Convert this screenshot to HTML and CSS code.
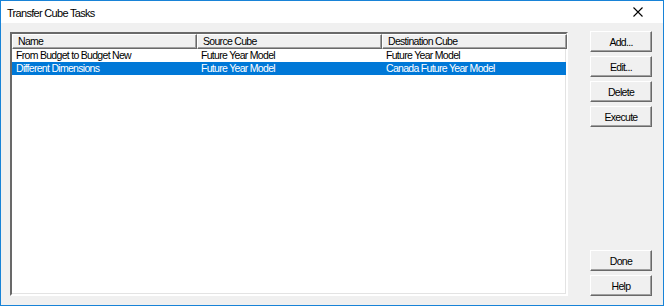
FILE: index.html
```html
<!DOCTYPE html>
<html lang="en">
<head>
    <meta charset="UTF-8">
    <title>Transfer Cube Tasks</title>
    <link rel="stylesheet" href="styles.css">
</head>
<body>
    <div class="window">
        <div class="titlebar">
            <span class="title">Transfer Cube Tasks</span>
            <span class="close">
                <svg width="10" height="10" viewBox="0 0 10 10"><path d="M0.5 0.5 L9.5 9.5 M9.5 0.5 L0.5 9.5" stroke="#000" stroke-width="1.1"/></svg>
            </span>
        </div>
        <div class="content">
            <div class="list">
                <div class="list-head">
                    <div class="col">Name</div>
                    <div class="col">Source Cube</div>
                    <div class="col">Destination Cube</div>
                </div>
                <div class="row">
                    <div class="cell">From Budget to Budget New</div>
                    <div class="cell">Future Year Model</div>
                    <div class="cell">Future Year Model</div>
                </div>
                <div class="row selected">
                    <div class="cell">Different Dimensions</div>
                    <div class="cell">Future Year Model</div>
                    <div class="cell">Canada Future Year Model</div>
                </div>
            </div>
            <div class="buttons">
                <button>Add...</button>
                <button>Edit...</button>
                <button>Delete</button>
                <button>Execute</button>
                <div class="spacer"></div>
                <button>Done</button>
                <button>Help</button>
            </div>
        </div>
    </div>
</body>
</html>
```

FILE: styles.css
```css
body {
    margin: 0;
    font-family: "Liberation Sans", Arial, sans-serif;
    font-size: 10.5px;
    letter-spacing: -0.7px;
    color: #000;
}
.window {
    width: 664px;
    height: 306px;
    box-sizing: border-box;
    border: 1px solid #1883d7;
    display: flex;
    flex-direction: column;
    background: #f0f0f0;
}
.titlebar {
    height: 22px;
    background: #fff;
    display: flex;
    align-items: center;
    justify-content: space-between;
    padding: 0 0 0 6px;
}
.title {
    font-size: 11px;
    margin-top: 1px;
}
.close {
    width: 46px;
    height: 22px;
    display: flex;
    align-items: center;
    justify-content: center;
    margin-right: 2px;
}
.content {
    flex: 1;
    display: flex;
    padding: 9px 11px 9px 9px;
}
.list {
    width: 558px;
    height: 264px;
    box-sizing: border-box;
    background: #fff;
    border-style: solid;
    border-width: 2px;
    border-color: #696969 #fff #fff #696969;
    box-shadow: inset -1px -1px 0 #e3e3e3;
}
.list-head,
.row {
    display: grid;
    grid-template-columns: 185px 185px 185px;
}
.list-head {
    height: 15px;
}
.col {
    background: #f0f0f0;
    border-style: solid;
    border-width: 1px;
    border-color: #fff #696969 #696969 #fff;
    box-shadow: inset -1px -1px 0 #a0a0a0;
    padding: 0 5px;
    line-height: 13px;
}
.row {
    height: 13px;
    line-height: 13px;
}
.cell {
    padding: 0 4px;
    white-space: nowrap;
}
.row.selected {
    background: #0078d7;
    color: #fff;
}
.buttons {
    margin-left: 22px;
    width: 62px;
    display: flex;
    flex-direction: column;
    gap: 4px;
    margin-top: -1px;
}
.spacer {
    flex: 1;
}
button {
    height: 21px;
    font-family: inherit;
    font-size: 10.5px;
    letter-spacing: -0.7px;
    background: #f0f0f0;
    color: #000;
    padding: 0;
    border-style: solid;
    border-width: 1px;
    border-color: #fff #696969 #696969 #fff;
    box-shadow: inset -1px -1px 0 #a0a0a0;
}
```
